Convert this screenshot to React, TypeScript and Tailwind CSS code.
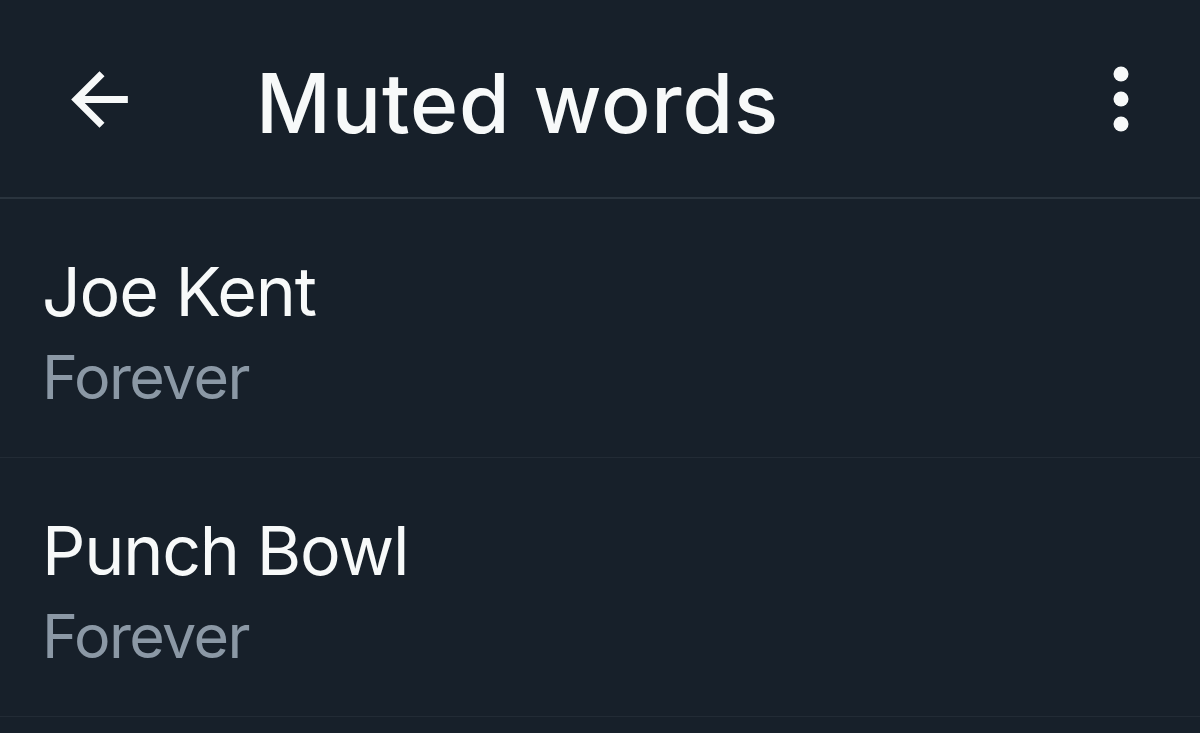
const words = [
  { word: "Joe Kent", duration: "Forever" },
  { word: "Punch Bowl", duration: "Forever" },
];

const BackArrow = () => (
  <svg viewBox="0 0 24 24" className="w-[85px] h-[85px]" fill="#f7f9f9">
    <path d="M20 11H7.83l5.59-5.59L12 4l-8 8 8 8 1.41-1.41L7.83 13H20v-2z" />
  </svg>
);

const MoreDots = () => (
  <svg viewBox="0 0 20 70" className="w-[20px] h-[70px]" fill="#f7f9f9">
    <circle cx="10" cy="10" r="7.5" />
    <circle cx="10" cy="35" r="7.5" />
    <circle cx="10" cy="60" r="7.5" />
  </svg>
);

export default function App() {
  return (
    <div className="w-[1200px] h-[733px] overflow-hidden bg-[#17202a] font-['Inter','Roboto',sans-serif] text-[#f7f9f9]">
      {/* Header */}
      <div className="flex items-center h-[199px] border-b-2 border-[#2a343e]">
        <div className="pl-[57px] pt-[1px]">
          <BackArrow />
        </div>
        <h1 className="ml-[114px] pt-[10px] text-[82px] leading-[100px] font-medium tracking-[0.9px]">
          Muted words
        </h1>
        <div className="ml-auto mr-[69px] pt-[1px]">
          <MoreDots />
        </div>
      </div>

      {/* Muted list */}
      {words.map((w) => (
        <div key={w.word} className="h-[259px] border-b border-[#222b35] pl-[42px] pt-[51px]">
          <div className="text-[68px] leading-[83px] tracking-[-1.2px]">{w.word}</div>
          <div className="text-[61px] leading-[89px] tracking-[-1.6px] text-[#8b98a5]">{w.duration}</div>
        </div>
      ))}
    </div>
  );
}
